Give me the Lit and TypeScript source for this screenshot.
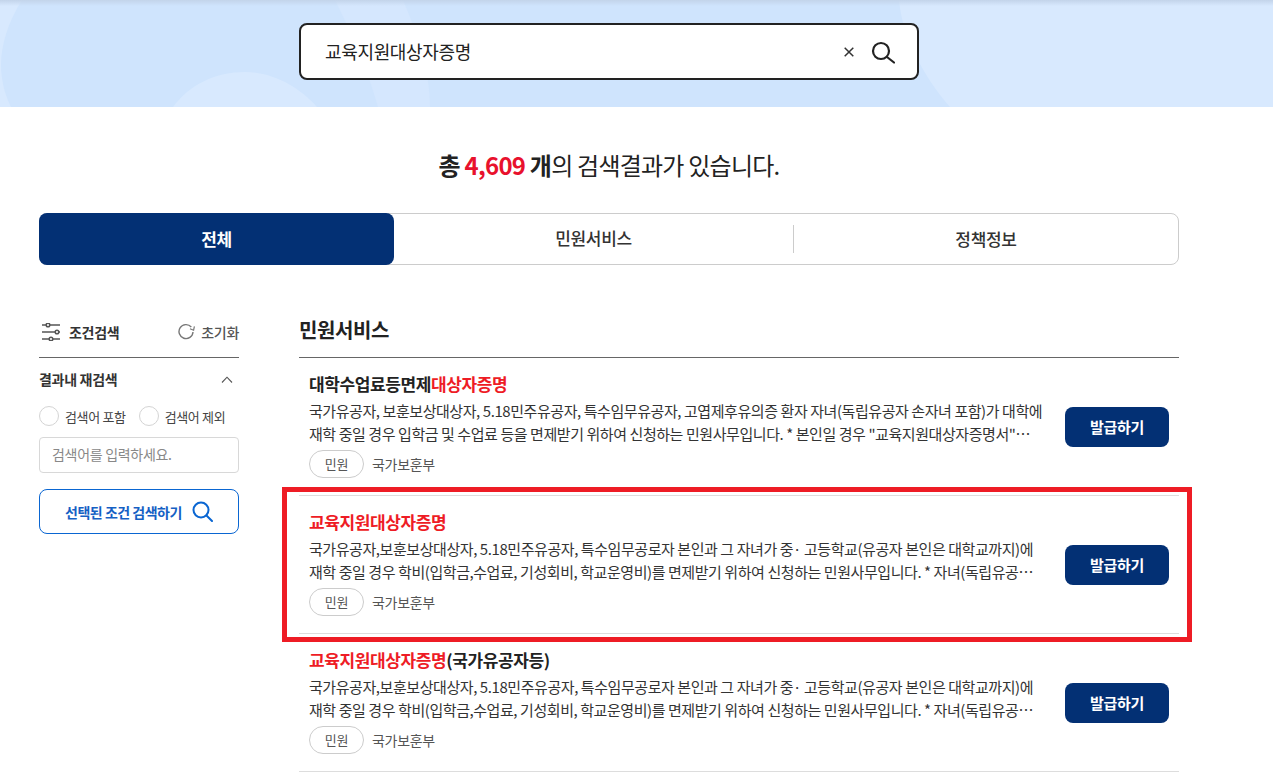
import { LitElement, html, css } from "lit";
import { customElement } from "lit/decorators.js";

const rows = [
  {
    title: html`대학수업료등면제<em>대상자증명</em>`,
    l1: '국가유공자, 보훈보상대상자, 5.18민주유공자, 특수임무유공자, 고엽제후유의증 환자 자녀(독립유공자 손자녀 포함)가 대학에',
    l2: '재학 중일 경우 입학금 및 수업료 등을 면제받기 위하여 신청하는 민원사무입니다. * 본인일 경우 "교육지원대상자증명서"…',
  },
  {
    title: html`<em>교육지원대상자증명</em>`,
    l1: '국가유공자,보훈보상대상자, 5.18민주유공자, 특수임무공로자 본인과 그 자녀가 중· 고등학교(유공자 본인은 대학교까지)에',
    l2: '재학 중일 경우 학비(입학금,수업료, 기성회비, 학교운영비)를 면제받기 위하여 신청하는 민원사무입니다. * 자녀(독립유공…',
  },
  {
    title: html`<em>교육지원대상자증명</em>(국가유공자등)`,
    l1: '국가유공자,보훈보상대상자, 5.18민주유공자, 특수임무공로자 본인과 그 자녀가 중· 고등학교(유공자 본인은 대학교까지)에',
    l2: '재학 중일 경우 학비(입학금,수업료, 기성회비, 학교운영비)를 면제받기 위하여 신청하는 민원사무입니다. * 자녀(독립유공…',
  },
];

@customElement("app-root")
export class AppRoot extends LitElement {
  static styles = css`
    :host {
      display: block;
      height: 781px;
      overflow: hidden;
      position: relative;
      background: #fff;
      color: #222;
      font-family: "Noto Sans CJK KR", "Noto Sans", sans-serif;
      letter-spacing: -0.3px;
    }
    .hero {
      height: 107px;
      background: #cfe4fd;
      position: relative;
      overflow: hidden;
      display: flex;
      align-items: flex-start;
      padding: 23px 0 0 299px;
      box-sizing: border-box;
    }
    .hero svg.bg { position: absolute; inset: 0; }
    .hero::after {
      content: "";
      position: absolute;
      inset: 0 0 auto 0;
      height: 6px;
      background: linear-gradient(#c3d4ea, rgba(195, 212, 234, 0));
    }
    .search {
      position: relative;
      z-index: 1;
      width: 620px;
      height: 57px;
      box-sizing: border-box;
      border: 2px solid #222;
      border-radius: 8px;
      background: #fff;
      display: flex;
      align-items: center;
      padding: 0 22px 0 24px;
    }
    .search .q { flex: 1; font-size: 18px; color: #222; line-height: 1; letter-spacing: -0.35px; margin-top: -1px; }
    .search .x { width: 10px; height: 10px; margin: 1px 17px 0 0; }
    .search .mag { width: 24px; height: 24px; }
    .count {
      margin: 40px 0 0 39px;
      width: 1140px;
      text-align: center;
      font-size: 24px;
      line-height: 36px;
      letter-spacing: -0.77px;
    }
    .count b { font-weight: 700; }
    .count .n { color: #e8112d; }
    .tabs {
      margin: 30px 0 0 39px;
      width: 1140px;
      height: 52px;
      box-sizing: border-box;
      border: 1px solid #ccc;
      border-radius: 8px;
      display: grid;
      grid-template-columns: 354px 400px 1fr;
      align-items: center;
      font-size: 17px;
      font-weight: 500;
      color: #333;
      text-align: center;
    }
    .tab { line-height: 26px; }
    .tab.on {
      background: #033074;
      color: #fff;
      font-weight: 700;
      height: 52px;
      margin: -1px 0 -1px -1px;
      border-radius: 8px;
      line-height: 51px;
    }
    .tab.mid { border-right: 1px solid #ccc; height: 28px; }
    .main {
      margin: 48px 0 0 39px;
      width: 1140px;
      display: grid;
      grid-template-columns: 200px 880px;
      column-gap: 60px;
    }
    .side-head {
      display: flex;
      align-items: center;
      height: 45px;
      box-sizing: border-box;
      padding-bottom: 7px;
      border-bottom: 1px solid #666;
      font-size: 14px;
      font-weight: 700;
      color: #333;
    }
    .side-head .sl { width: 18px; height: 18px; margin: 0 9px 0 3px; }
    .side-head .rs {
      margin-left: auto;
      display: flex;
      align-items: center;
      gap: 6px;
      font-weight: 500;
      font-size: 14px;
      color: #555;
    }
    .side-head .rs svg { width: 17px; height: 17px; }
    .side-sub {
      display: flex;
      justify-content: space-between;
      align-items: center;
      height: 42px;
      font-size: 14px;
      font-weight: 700;
      color: #333;
      padding: 0 6px 0 0;
    }
    .side-sub svg { width: 12px; height: 7px; }
    .radios {
      display: flex;
      align-items: center;
      height: 20px;
      font-size: 13px;
      color: #444;
      margin-top: 6px;
      letter-spacing: -0.35px;
    }
    .radio {
      width: 20px;
      height: 20px;
      box-sizing: border-box;
      border: 1px solid #d4d4d4;
      border-radius: 50%;
      margin-right: 6px;
    }
    .radios span + .radio { margin-left: 13px; }
    .field {
      margin-top: 11px;
      height: 36px;
      box-sizing: border-box;
      border: 1px solid #d8d8d8;
      border-radius: 4px;
      font-size: 14px;
      color: #888;
      line-height: 32px;
      padding-left: 12px;
    }
    .apply {
      margin-top: 16px;
      height: 45px;
      box-sizing: border-box;
      border: 1px solid #0a66d2;
      border-radius: 8px;
      display: flex;
      align-items: center;
      justify-content: center;
      gap: 10px;
      font-size: 14px;
      letter-spacing: -0.5px;
      font-weight: 700;
      color: #1560c4;
    }
    .apply svg { width: 21px; height: 21px; }
    h2 {
      margin: 0;
      height: 44px;
      line-height: 34px;
      font-size: 20px;
      font-weight: 700;
      color: #222;
      border-bottom: 1px solid #666;
      letter-spacing: -0.4px;
    }
    .row {
      height: 138px;
      box-sizing: border-box;
      border-bottom: 1px solid #ddd;
      padding: 14px 10px 0;
      display: grid;
      grid-template-columns: 1fr 104px;
      column-gap: 24px;
      align-items: center;
    }
    .row .body { align-self: start; min-width: 0; }
    .row .t {
      font-size: 17px;
      font-weight: 700;
      line-height: 24px;
      color: #222;
      letter-spacing: -0.4px;
    }
    .row .t em { font-style: normal; color: #ee1c25; }
    .row .d {
      font-size: 15px;
      line-height: 23px;
      color: #333;
      margin-top: 3px;
      letter-spacing: -0.43px;
      white-space: nowrap;
    }
    .row .d + .d { margin-top: 0; }
    .meta {
      display: flex;
      align-items: center;
      gap: 8px;
      margin-top: 5px;
      font-size: 14px;
      color: #555;
    }
    .tag {
      width: 55px;
      height: 28px;
      box-sizing: border-box;
      border: 1px solid #ccc;
      border-radius: 14px;
      font-size: 13px;
      color: #555;
      line-height: 25px;
      text-align: center;
    }
    .btn {
      height: 40px;
      border-radius: 8px;
      background: #033074;
      color: #fff;
      font-size: 15px;
      font-weight: 700;
      line-height: 39px;
      text-align: center;
      margin-top: -14px;
    }
    .mark {
      position: absolute;
      left: 282px;
      top: 487px;
      width: 910px;
      height: 155px;
      box-sizing: border-box;
      border: 5px solid #ee1c25;
      pointer-events: none;
    }
  `;

  render() {
    return html`
      <div class="hero">
        <svg class="bg" width="1273" height="107" viewBox="0 0 1273 107">
          <path d="M0 0H22C8 22 1 45 1 65C1 80 5 95 11 107H0Z" fill="#d8e9fe" />
          <path d="M173 107C190 84 216 72 245 72C272 72 298 86 317 107Z" fill="#d8e9fe" />
          <path d="M335 0H403C418 35 430 72 430 107H378C368 70 350 30 335 0Z" fill="#d5e7fe" />
          <path d="M899 0H1273V107H950C922 75 902 35 899 0Z" fill="#d8e9fe" />
        </svg>
        <div class="search">
          <span class="q">교육지원대상자증명</span>
          <svg class="x" viewBox="0 0 10 10"><path d="M.7 .7L9.3 9.3M9.3 .7L.7 9.3" stroke="#333" stroke-width="1.5" fill="none" /></svg>
          <svg class="mag" viewBox="0 0 24 24" fill="none" stroke="#222" stroke-width="2.2" stroke-linecap="round">
            <circle cx="10" cy="11" r="8" /><path d="M16 17L23 22.5" />
          </svg>
        </div>
      </div>

      <div class="count"><b>총 <span class="n">4,609</span> 개</b>의 검색결과가 있습니다.</div>

      <div class="tabs">
        <div class="tab on">전체</div>
        <div class="tab mid">민원서비스</div>
        <div class="tab">정책정보</div>
      </div>

      <div class="main">
        <aside>
          <div class="side-head">
            <svg class="sl" viewBox="0 0 18 18" fill="none" stroke="#555" stroke-width="1.5">
              <path d="M0 2H4M8 2H18M0 9H13M17 9H18M0 16H7M11 16H18" />
              <circle cx="6" cy="2" r="1.8" /><circle cx="15" cy="9" r="1.8" /><circle cx="9" cy="16" r="1.8" />
            </svg>
            조건검색
            <span class="rs">
              <svg viewBox="0 0 17 17" fill="none" stroke="#777" stroke-width="1.4">
                <path d="M13.3 4A7 7 0 1 0 15 9" /><path d="M12 5.8L15.6 7.2L16.4 3.4" stroke-width="1.2" />
              </svg>
              초기화
            </span>
          </div>
          <div class="side-sub">
            결과내 재검색
            <svg viewBox="0 0 12 7" fill="none" stroke="#555" stroke-width="1.1"><path d="M1 6.5L6 1.2L11 6.5" /></svg>
          </div>
          <div class="radios">
            <i class="radio"></i><span>검색어 포함</span>
            <i class="radio"></i><span>검색어 제외</span>
          </div>
          <div class="field">검색어를 입력하세요.</div>
          <div class="apply">
            선택된 조건 검색하기
            <svg viewBox="0 0 21 21" fill="none" stroke="#0a66d2" stroke-width="2" stroke-linecap="round">
              <circle cx="9" cy="9" r="7.5" /><path d="M14.5 14.5L20 20" />
            </svg>
          </div>
        </aside>
        <section>
          <h2>민원서비스</h2>
          ${rows.map(
            (r) => html`
              <div class="row">
                <div class="body">
                  <div class="t">${r.title}</div>
                  <div class="d">${r.l1}</div>
                  <div class="d">${r.l2}</div>
                  <div class="meta"><span class="tag">민원</span><span>국가보훈부</span></div>
                </div>
                <div class="btn">발급하기</div>
              </div>
            `
          )}
        </section>
      </div>
      <div class="mark"></div>
    `;
  }
}
